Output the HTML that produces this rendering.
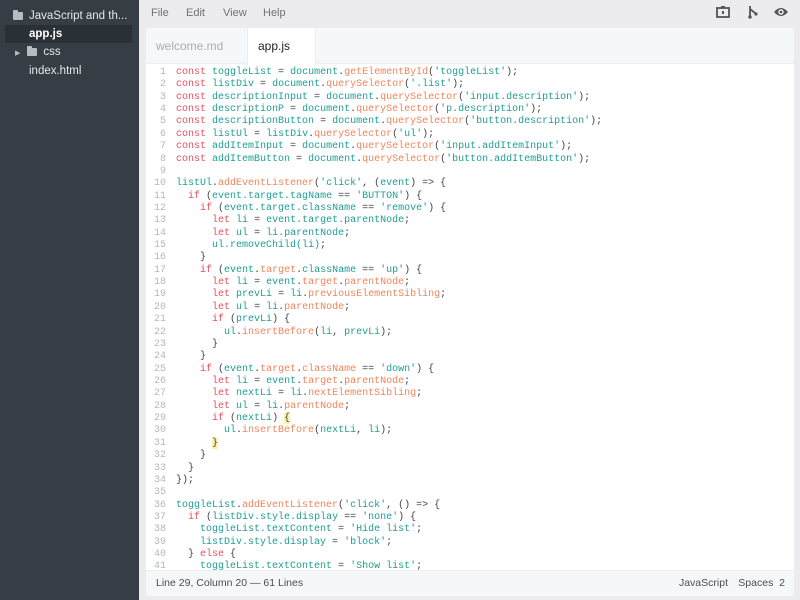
<!DOCTYPE html>
<html><head><meta charset="utf-8"><style>
*{margin:0;padding:0;box-sizing:border-box}
body{width:800px;height:600px;overflow:hidden;background:#ececee;font-family:"Liberation Sans",sans-serif;position:relative}
#side{position:absolute;left:0;top:0;width:139px;height:600px;background:#373d44;color:#e6e8ea;font-size:11.5px}
#side .it{position:absolute;left:0;height:17px;line-height:17px;white-space:nowrap}
.fold{display:inline-block;width:10px;height:8px;background:#b8bcc1;border-radius:1px;position:relative;vertical-align:middle}
.fold:before{content:"";position:absolute;left:0;top:-2px;width:5px;height:3px;background:#b8bcc1;border-radius:1px 1px 0 0}
#menu{position:absolute;left:0;top:7px;font-size:11px;color:#6d7278}
#menu span{position:absolute;top:0}
#panel{position:absolute;left:146px;top:28px;width:648px;height:568px;background:#fff;border-radius:3px;overflow:hidden}
#tabs{height:36px;background:#f6f7f8;position:relative;border-bottom:1px solid #eee}
.tab{position:absolute;top:0;height:36px;line-height:36px;font-size:12px}
#code{position:absolute;left:0;top:37px;width:648px;height:505px;overflow:hidden;font-family:"Liberation Mono",monospace;font-size:10px;padding-top:2px}
.l{height:12.37px;line-height:12.37px;white-space:pre;position:relative}
.n{position:absolute;left:0;width:20px;text-align:right;color:#b4b8bc}
.c{position:absolute;left:30px;color:#444}
.k{color:#e5505c}.t{color:#1e9e94}.o{color:#f1845a}
.hl{background:#fbf2a8}
#status{position:absolute;left:0;top:542px;width:648px;height:26px;background:#f6f7f8;border-top:1px solid #eee;font-size:10.5px;color:#4a4f55;line-height:25px}
</style></head><body>
<div id="side">
<div class="it" style="top:8px;left:13px"><span class="fold"></span><span style="margin-left:6px">JavaScript and th...</span></div>
<div style="position:absolute;left:5px;top:25px;width:127px;height:18px;background:#2b3036"></div>
<div class="it" style="top:26px;left:29px;font-weight:bold;color:#fff">app.js</div>
<div class="it" style="top:44px;left:15px"><span style="font-size:7px;color:#b8bcc1">▶</span><span class="fold" style="margin-left:7px"></span><span style="margin-left:6px">css</span></div>
<div class="it" style="top:63px;left:29px">index.html</div>
</div>
<div id="menu"><span style="left:151px">File</span><span style="left:186px">Edit</span><span style="left:223px">View</span><span style="left:263px">Help</span></div>
<svg style="position:absolute;left:716px;top:5px" width="14" height="14" viewBox="0 0 14 14"><rect x="1" y="3" width="12" height="9" fill="none" stroke="#555" stroke-width="1.8"/><rect x="5" y="1" width="4" height="2" fill="#555"/><rect x="6" y="6" width="2" height="3" fill="#555"/></svg>
<svg style="position:absolute;left:746px;top:5px" width="14" height="14" viewBox="0 0 14 14"><path d="M4 1V12M4 4L9 8" stroke="#555" stroke-width="1.8" fill="none"/><circle cx="4" cy="12" r="1.7" fill="#555"/><circle cx="10" cy="9" r="1.6" fill="#555"/></svg>
<svg style="position:absolute;left:773px;top:6px" width="16" height="12" viewBox="0 0 16 12"><path d="M1 6Q8 -2 15 6Q8 14 1 6Z" fill="#555"/><circle cx="8" cy="6" r="2.7" fill="#fff"/><circle cx="8" cy="6" r="1.4" fill="#555"/></svg>
<div id="panel">
<div id="tabs">
<div class="tab" style="left:10px;color:#a9adb2">welcome.md</div>
<div class="tab" style="left:101px;width:69px;background:#fff;border-left:1px solid #eee;border-right:1px solid #eee;height:37px;padding-left:10px;color:#222">app.js</div>
</div>
<div id="code">
<div class="l"><span class="n">1</span><span class="c"><span class="k">const</span> <span class="t">toggleList</span> = <span class="t">document</span>.<span class="o">getElementById</span>(<span class="t">'toggleList'</span>);</span></div>
<div class="l"><span class="n">2</span><span class="c"><span class="k">const</span> <span class="t">listDiv</span> = <span class="t">document</span>.<span class="o">querySelector</span>(<span class="t">'.list'</span>);</span></div>
<div class="l"><span class="n">3</span><span class="c"><span class="k">const</span> <span class="t">descriptionInput</span> = <span class="t">document</span>.<span class="o">querySelector</span>(<span class="t">'input.description'</span>);</span></div>
<div class="l"><span class="n">4</span><span class="c"><span class="k">const</span> <span class="t">descriptionP</span> = <span class="t">document</span>.<span class="o">querySelector</span>(<span class="t">'p.description'</span>);</span></div>
<div class="l"><span class="n">5</span><span class="c"><span class="k">const</span> <span class="t">descriptionButton</span> = <span class="t">document</span>.<span class="o">querySelector</span>(<span class="t">'button.description'</span>);</span></div>
<div class="l"><span class="n">6</span><span class="c"><span class="k">const</span> <span class="t">listUl</span> = <span class="t">listDiv</span>.<span class="o">querySelector</span>(<span class="t">'ul'</span>);</span></div>
<div class="l"><span class="n">7</span><span class="c"><span class="k">const</span> <span class="t">addItemInput</span> = <span class="t">document</span>.<span class="o">querySelector</span>(<span class="t">'input.addItemInput'</span>);</span></div>
<div class="l"><span class="n">8</span><span class="c"><span class="k">const</span> <span class="t">addItemButton</span> = <span class="t">document</span>.<span class="o">querySelector</span>(<span class="t">'button.addItemButton'</span>);</span></div>
<div class="l"><span class="n">9</span></div>
<div class="l"><span class="n">10</span><span class="c"><span class="t">listUl</span>.<span class="o">addEventListener</span>(<span class="t">'click'</span>, (<span class="t">event</span>) => {</span></div>
<div class="l"><span class="n">11</span><span class="c">  <span class="k">if</span> (<span class="t">event.target.tagName</span> == <span class="t">'BUTTON'</span>) {</span></div>
<div class="l"><span class="n">12</span><span class="c">    <span class="k">if</span> (<span class="t">event.target.className</span> == <span class="t">'remove'</span>) {</span></div>
<div class="l"><span class="n">13</span><span class="c">      <span class="k">let</span> <span class="t">li</span> = <span class="t">event.target.parentNode</span>;</span></div>
<div class="l"><span class="n">14</span><span class="c">      <span class="k">let</span> <span class="t">ul</span> = <span class="t">li.parentNode</span>;</span></div>
<div class="l"><span class="n">15</span><span class="c">      <span class="t">ul.removeChild(li)</span>;</span></div>
<div class="l"><span class="n">16</span><span class="c">    }</span></div>
<div class="l"><span class="n">17</span><span class="c">    <span class="k">if</span> (<span class="t">event</span>.<span class="o">target</span>.<span class="t">className</span> == <span class="t">'up'</span>) {</span></div>
<div class="l"><span class="n">18</span><span class="c">      <span class="k">let</span> <span class="t">li</span> = <span class="t">event</span>.<span class="o">target</span>.<span class="o">parentNode</span>;</span></div>
<div class="l"><span class="n">19</span><span class="c">      <span class="k">let</span> <span class="t">prevLi</span> = <span class="t">li</span>.<span class="o">previousElementSibling</span>;</span></div>
<div class="l"><span class="n">20</span><span class="c">      <span class="k">let</span> <span class="t">ul</span> = <span class="t">li</span>.<span class="o">parentNode</span>;</span></div>
<div class="l"><span class="n">21</span><span class="c">      <span class="k">if</span> (<span class="t">prevLi</span>) {</span></div>
<div class="l"><span class="n">22</span><span class="c">        <span class="t">ul</span>.<span class="o">insertBefore</span>(<span class="t">li</span>, <span class="t">prevLi</span>);</span></div>
<div class="l"><span class="n">23</span><span class="c">      }</span></div>
<div class="l"><span class="n">24</span><span class="c">    }</span></div>
<div class="l"><span class="n">25</span><span class="c">    <span class="k">if</span> (<span class="t">event</span>.<span class="o">target</span>.<span class="o">className</span> == <span class="t">'down'</span>) {</span></div>
<div class="l"><span class="n">26</span><span class="c">      <span class="k">let</span> <span class="t">li</span> = <span class="t">event</span>.<span class="o">target</span>.<span class="o">parentNode</span>;</span></div>
<div class="l"><span class="n">27</span><span class="c">      <span class="k">let</span> <span class="t">nextLi</span> = <span class="t">li</span>.<span class="o">nextElementSibling</span>;</span></div>
<div class="l"><span class="n">28</span><span class="c">      <span class="k">let</span> <span class="t">ul</span> = <span class="t">li</span>.<span class="o">parentNode</span>;</span></div>
<div class="l"><span class="n">29</span><span class="c">      <span class="k">if</span> (<span class="t">nextLi</span>) <span class="hl">{</span></span></div>
<div class="l"><span class="n">30</span><span class="c">        <span class="t">ul</span>.<span class="o">insertBefore</span>(<span class="t">nextLi</span>, <span class="t">li</span>);</span></div>
<div class="l"><span class="n">31</span><span class="c">      <span class="hl">}</span></span></div>
<div class="l"><span class="n">32</span><span class="c">    }</span></div>
<div class="l"><span class="n">33</span><span class="c">  }</span></div>
<div class="l"><span class="n">34</span><span class="c">});</span></div>
<div class="l"><span class="n">35</span></div>
<div class="l"><span class="n">36</span><span class="c"><span class="t">toggleList</span>.<span class="o">addEventListener</span>(<span class="t">'click'</span>, () => {</span></div>
<div class="l"><span class="n">37</span><span class="c">  <span class="k">if</span> (<span class="t">listDiv.style.display</span> == <span class="t">'none'</span>) {</span></div>
<div class="l"><span class="n">38</span><span class="c">    <span class="t">toggleList.textContent</span> = <span class="t">'Hide list'</span>;</span></div>
<div class="l"><span class="n">39</span><span class="c">    <span class="t">listDiv.style.display</span> = <span class="t">'block'</span>;</span></div>
<div class="l"><span class="n">40</span><span class="c">  } <span class="k">else</span> {</span></div>
<div class="l"><span class="n">41</span><span class="c">    <span class="t">toggleList.textContent</span> = <span class="t">'Show list'</span>;</span></div>
</div>
<div id="status"><span style="position:absolute;left:10px">Line 29, Column 20 — 61 Lines</span><span style="position:absolute;right:66px">JavaScript</span><span style="position:absolute;right:9px">Spaces&nbsp; 2</span></div>
</div>
</body></html>
